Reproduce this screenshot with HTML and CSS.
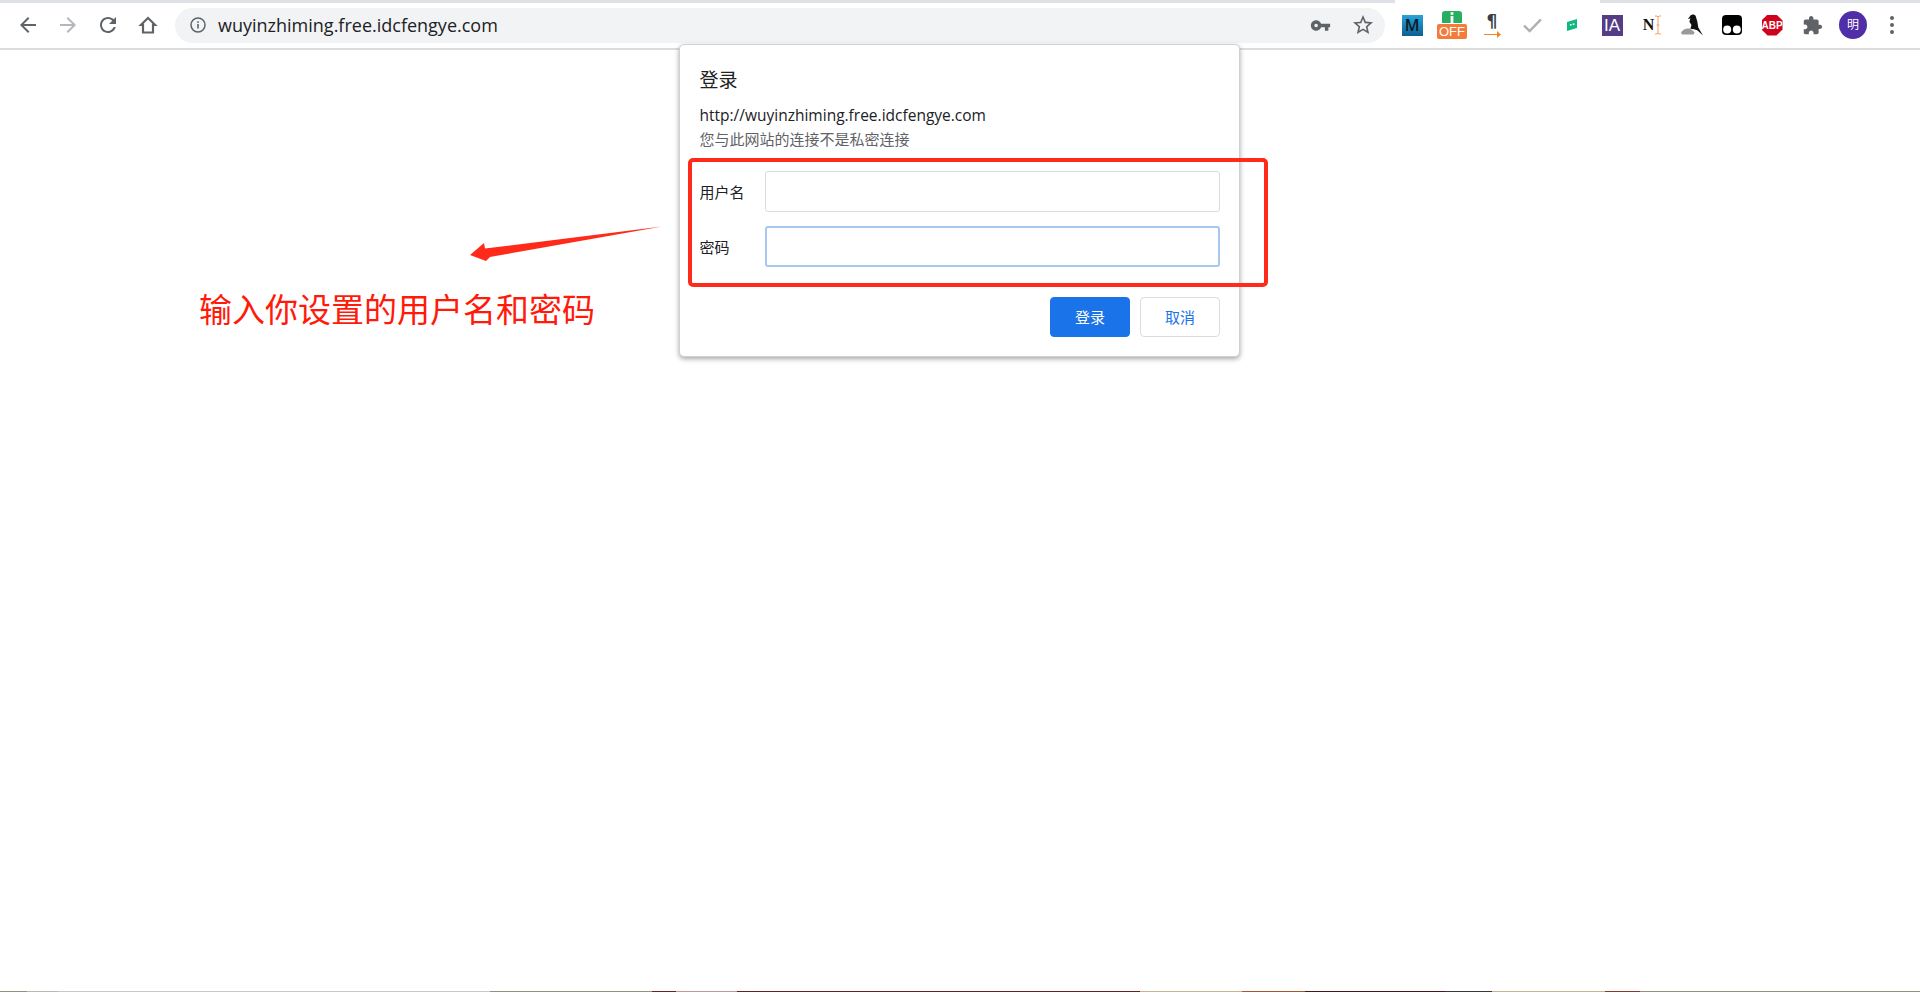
FILE: index.html
```html
<!DOCTYPE html>
<html lang="zh-CN">
<head>
<meta charset="utf-8">
<title>登录</title>
<link rel="stylesheet" href="styles.css">
</head>
<body>
<div class="tabstrip"><div class="active-tab"></div></div>
<header class="toolbar">
  <nav class="nav">
    <svg class="nav-icon" viewBox="0 0 24 24"><path d="M20 11H7.83l5.59-5.59L12 4l-8 8 8 8 1.41-1.41L7.83 13H20v-2z"/></svg>
    <svg class="nav-icon disabled" viewBox="0 0 24 24"><path d="M4 13h12.17l-5.59 5.59L12 20l8-8-8-8-1.41 1.41L16.17 11H4v2z"/></svg>
    <svg class="nav-icon" viewBox="0 0 24 24"><path d="M17.65 6.35C16.2 4.9 14.21 4 12 4c-4.42 0-7.99 3.58-7.99 8s3.57 8 7.99 8c3.73 0 6.84-2.55 7.73-6h-2.08c-.82 2.33-3.04 4-5.65 4-3.31 0-6-2.69-6-6s2.69-6 6-6c1.66 0 3.14.69 4.22 1.78L13 11h7V4l-2.35 2.35z"/></svg>
    <svg class="nav-icon" viewBox="0 0 24 24"><path class="home" d="M12 5L5 11.800h2v7.700h10v-7.700h2z"/></svg>
  </nav>
  <div class="omnibox">
    <svg class="info" viewBox="0 0 16 16"><circle cx="8" cy="8" r="7" fill="none" stroke="#5f6368" stroke-width="1.5"/><rect x="7.2" y="7" width="1.6" height="4.5" fill="#5f6368"/><rect x="7.2" y="4.3" width="1.6" height="1.6" fill="#5f6368"/></svg>
    <span class="url">wuyinzhiming.free.idcfengye.com</span>
    <svg class="omni-key" viewBox="0 0 24 24"><path d="M12.65 10C11.83 7.67 9.61 6 7 6c-3.31 0-6 2.69-6 6s2.69 6 6 6c2.61 0 4.83-1.67 5.65-4H17v4h4v-4h2v-4H12.65zM7 14c-1.1 0-2-.9-2-2s.9-2 2-2 2 .9 2 2-.9 2-2 2z"/></svg>
    <svg class="omni-star" viewBox="0 0 24 24"><path d="M22 9.24l-7.19-.62L12 2 9.19 8.63 2 9.24l5.46 4.73L5.82 21 12 17.27 18.18 21l-1.63-7.03L22 9.24zM12 15.4l-3.76 2.27 1-4.28-3.32-2.88 4.38-.38L12 6.1l1.71 4.04 4.38.38-3.32 2.88 1 4.28L12 15.4z"/></svg>
  </div>
  <div class="extensions">
    <div class="ext"><span class="ext-m">M</span></div>
    <div class="ext"><div class="ext-off"><svg class="off-top" viewBox="0 0 20 12"><path d="M0 12V3a3 3 0 0 1 3-3h14a3 3 0 0 1 3 3v9z" fill="#27ae60"/><rect x="8.6" y="5" width="2.8" height="7" fill="#fff"/><rect x="8.6" y="1.2" width="2.8" height="2.6" fill="#fff"/></svg><span class="off-label">OFF</span></div></div>
    <div class="ext"><div class="ext-para"><span class="para-mark">¶</span><svg class="para-arrow" viewBox="0 0 17 7"><path d="M0 3h13V0l4 3.5L13 7V4H0z" fill="#f5861f"/></svg></div></div>
    <div class="ext"><svg class="ext-check" viewBox="0 0 20 16"><path d="M1 8l6 6L19 1.5" fill="none" stroke="#b0b0b0" stroke-width="2.6"/></svg></div>
    <div class="ext"><svg class="ext-flag" viewBox="0 0 12 12"><path d="M1 3l10-3v9L1 12z" fill="#10b981"/><rect x="4" y="5" width="1.6" height="1.6" fill="#fff"/><rect x="6.8" y="4.4" width="1.6" height="1.6" fill="#fff"/></svg></div>
    <div class="ext"><span class="ext-ia">IA</span></div>
    <div class="ext"><div class="ext-n"><span class="n-mark">N</span><svg class="n-cursor" viewBox="0 0 6 20"><path d="M0 1h2l1 1 1-1h2M3 2v16M0 19h2l1-1 1 1h2M1.5 10h3" fill="none" stroke="#f5a05f" stroke-width="1"/></svg></div></div>
    <div class="ext"><svg class="ext-bird" viewBox="0 0 21 21"><path d="M9 1.500c2-1.500 4-1 5 .5l1.500 5 1 6 4.500 7.500-5.500-5-3-1-3.500-.5 1-3.500-2-3 1-3.500L6.500 5z" fill="#111"/><path d="M0 18c1-3 5-5 9-4l4 3.500-1 2H1z" fill="#9a9a9a"/></svg></div>
    <div class="ext"><svg class="ext-tm" viewBox="0 0 20 20"><rect width="20" height="20" rx="4" fill="#000"/><circle cx="5.200" cy="14.500" r="4" fill="#fff"/><circle cx="14.800" cy="14.500" r="4" fill="#fff"/></svg></div>
    <div class="ext"><div class="ext-abp"><span>ABP</span></div></div>
    <div class="ext"><svg class="ext-puzzle" viewBox="0 0 24 24"><path d="M20.5 11H19V7c0-1.1-.9-2-2-2h-4V3.5C13 2.12 11.88 1 10.5 1S8 2.12 8 3.5V5H4c-1.1 0-1.99.9-1.99 2v3.8H3.5c1.49 0 2.7 1.21 2.7 2.7s-1.21 2.7-2.7 2.7H2V20c0 1.1.9 2 2 2h3.8v-1.5c0-1.49 1.21-2.7 2.7-2.7 1.49 0 2.7 1.21 2.7 2.7V22H17c1.1 0 2-.9 2-2v-4h1.5c1.38 0 2.5-1.12 2.5-2.5S21.88 11 20.5 11z"/></svg></div>
  </div>
  <div class="avatar">明</div>
  <div class="menu"><i></i><i></i><i></i></div>
</header>
<main class="page">
  <section class="dialog">
    <h1 class="dialog-title">登录</h1>
    <p class="dialog-url">http://wuyinzhiming.free.idcfengye.com</p>
    <p class="dialog-note">您与此网站的连接不是私密连接</p>
    <div class="field"><label class="field-label">用户名</label><div class="input"></div></div>
    <div class="field"><label class="field-label">密码</label><div class="input focused"></div></div>
    <div class="actions"><button class="btn primary">登录</button><button class="btn">取消</button></div>
  </section>
  <div class="red-box"></div>
  <svg class="arrow" viewBox="0 0 192 40"><path d="M0 30L14 18l1 5.500L192 1.500 20 32l-4 4z" fill="#ff2a1a"/></svg>
  <div class="note">输入你设置的用户名和密码</div>
</main>
<div class="strip"></div>
</body>
</html>
```
FILE: styles.css
```css
* { box-sizing: border-box; }
html, body { margin: 0; height: 100%; background: #fff; overflow: hidden; }
body { display: flex; flex-direction: column; font-family: "Open Sans", "Noto Sans CJK SC", sans-serif; color: #202124; }

.tabstrip { height: 3px; background: #dee1e6; padding-left: 1395px; flex: none; }
.active-tab { width: 205px; height: 3px; background: #fff; }

.toolbar { height: 47px; flex: none; display: flex; align-items: center; background: #fff; border-bottom: 2px solid #dadce0; padding-left: 16px; padding-bottom: 1px; }
.nav { display: flex; gap: 16px; width: 159px; flex: none; }
.nav-icon { width: 24px; height: 24px; fill: #5f6368; }
.nav-icon.disabled { fill: #b5b7ba; }
.nav-icon .home { fill: none; stroke: #5f6368; stroke-width: 2.2; stroke-linejoin: miter; }

.omnibox { width: 1210px; height: 35px; flex: none; background: #f1f3f4; border-radius: 18px; display: flex; align-items: center; padding: 0 10px 0 15px; }
.info { width: 16px; height: 16px; flex: none; margin-right: 12px; }
.url { font-size: 18px; color: #202124; flex: 1; }
.omni-key { width: 21px; height: 21px; fill: #5f6368; margin-right: 20px; }
.omni-star { width: 24px; height: 24px; fill: #5f6368; }

.extensions { display: flex; margin-left: 7px; flex: none; }
.ext { width: 40px; height: 40px; flex: none; display: flex; align-items: center; justify-content: center; }
.ext-m { width: 21px; height: 21px; background: linear-gradient(#27a4dc, #0f5f8f); color: #0b1a26; font: 600 16px/21px "Open Sans", sans-serif; text-align: center; }
.ext-off { width: 30px; display: flex; flex-direction: column; align-items: center; }
.off-top { width: 20px; height: 12px; display: block; }
.off-label { width: 30px; height: 15px; margin-top: 1px; background: #f47b3a; color: #fff; border-radius: 2px; font: 13px/15px "Liberation Sans", sans-serif; text-align: center; }
.ext-para { width: 17px; display: flex; flex-direction: column; align-items: center; }
.para-mark { font: 700 17px/17px "DejaVu Sans", sans-serif; color: #3a3f45; }
.para-arrow { width: 17px; height: 7px; display: block; margin-top: 1px; }
.ext-check { width: 19px; height: 15px; }
.ext-flag { width: 12px; height: 12px; }
.ext-ia { width: 21px; height: 21px; background: #553c86; color: #fff; font: 17px/21px "Liberation Sans", sans-serif; text-align: center; }
.ext-n { display: flex; align-items: center; gap: 1px; }
.n-mark { font: 700 16px/20px "Liberation Serif", serif; color: #111; }
.n-cursor { width: 6px; height: 20px; }
.ext-bird { width: 22px; height: 22px; }
.ext-tm { width: 20px; height: 20px; }
.ext-abp { width: 21px; height: 21px; background: #d0021b; clip-path: polygon(29% 0, 71% 0, 100% 29%, 100% 71%, 71% 100%, 29% 100%, 0 71%, 0 29%); display: flex; align-items: center; justify-content: center; }
.ext-abp span { color: #fff; font: 700 10px/21px "Liberation Sans", sans-serif; }
.ext-puzzle { width: 21px; height: 21px; fill: #5f6368; }

.avatar { width: 28px; height: 28px; flex: none; margin-left: 7px; border-radius: 50%; background: #4f2ea8; color: #fff; font-size: 12px; line-height: 28px; text-align: center; }
.menu { margin-left: 23px; display: flex; flex-direction: column; gap: 3px; flex: none; }
.menu i { display: block; width: 4px; height: 4px; border-radius: 50%; background: #5f6368; }

.page { flex: 1; position: relative; background: #fff; }
.dialog { position: absolute; left: 679px; top: -6px; width: 561px; height: 313px; background: #fff; border-radius: 5px; border: 1px solid #d0d0d0; box-shadow: 0 2px 5px rgba(0,0,0,.35); padding: 22px 19px 0 19.5px; }
.dialog-title { margin: 0; font-size: 19px; font-weight: 400; line-height: 26px; color: #202124; }
.dialog-url { margin: 11px 0 0; font-size: 15.5px; line-height: 22px; color: #202124; }
.dialog-note { margin: 2px 0 0; font-size: 15px; line-height: 22px; color: #5f6368; }
.field { display: flex; align-items: center; height: 41px; margin-top: 14px; }
.field:first-of-type { margin-top: 21px; }
.field-label { width: 65.500px; flex: none; font-size: 15px; color: #202124; }
.input { flex: 1; height: 41px; border: 1px solid #dadce0; border-radius: 3px; background: #fff; }
.input.focused { border: 2px solid #a8c7f0; }
.actions { display: flex; justify-content: flex-end; gap: 10px; margin-top: 30px; }
.btn { width: 80px; height: 40px; border: 1px solid #dadce0; border-radius: 4px; background: #fff; color: #1a73e8; font: 15px "Open Sans", "Noto Sans CJK SC", sans-serif; padding: 0 0 2px; }
.btn.primary { border-color: #1a73e8; background: #1a73e8; color: #fff; }

.red-box { position: absolute; left: 688px; top: 108px; width: 580px; height: 129px; border: 4px solid #ff2a1a; border-radius: 5px; }
.arrow { position: absolute; left: 470px; top: 175px; width: 192px; height: 40px; }
.note { position: absolute; left: 199px; top: 238px; font-size: 33px; line-height: 44px; color: #ff1a0a; white-space: nowrap; }

.strip { height: 1px; flex: none; background: linear-gradient(90deg, #8f9280 0 27px, #b9b9ae 27px 58px, #c8c8c8 58px 490px, #93937f 490px 652px, #6e2020 652px 676px, #c09a9a 676px 737px, #6a1c20 737px 1140px, #c9b48f 1140px 1242px, #a8552a 1242px 1305px, #4a1518 1305px 1445px, #3c3836 1445px 1492px, #c9b48f 1492px 1605px, #8a3a2a 1605px 1640px, #93937f 1640px 1920px); }
```
